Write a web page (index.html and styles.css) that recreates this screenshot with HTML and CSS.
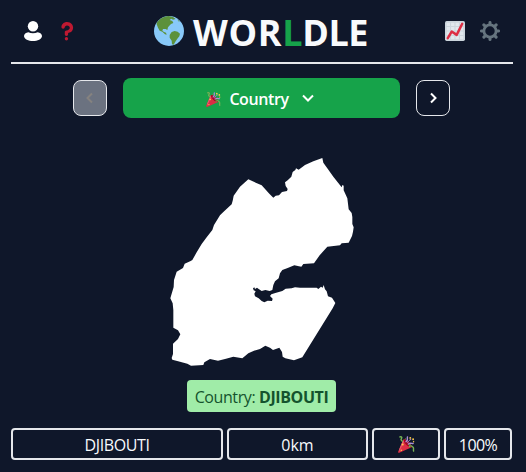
FILE: index.html
```html
<!DOCTYPE html>
<html lang="en">
<head>
<meta charset="utf-8">
<title>Worldle</title>
<link rel="stylesheet" href="styles.css">
</head>
<body>
<svg class="defs" aria-hidden="true">
  <symbol id="popper" viewBox="0 0 36 36">
    <path fill="#dd2e44" d="M11.600 7.600c-.1.1-.2.3-.3.5L.2 33.300c-.5 1.300 1 2.900 2.500 2.400l25.200-11.100c.2-.1.4-.2.5-.3 1.700-1.700-.6-6.800-5.200-11.400S13.300 5.900 11.600 7.600z"/>
    <path fill="#ea596e" d="M13 12l-11 22 1-7 8-19z"/>
    <path fill="#a0041e" d="M23 13c4.400 4.400 6.700 9.300 5.200 10.800S21.800 23 17.400 18.600 11.100 9.300 12.600 7.800 18.600 8.600 23 13z"/>
    <path fill="none" stroke="#aa8dd8" stroke-width="3" stroke-linecap="round" d="M17 12c5-3 2-6 3-10M22 17c5-3 6-1 10-1"/>
    <path fill="none" stroke="#77b255" stroke-width="3" stroke-linecap="round" d="M4 2c4-1 5 1 3 4s1 3 2 5M24 22c4-3 6 0 8 2s0 5 1 8"/>
    <path fill="none" stroke="#aa8dd8" stroke-width="2" d="M20 15c2-4 4-7 8-8"/>
    <g fill="#ffcc4d"><circle cx="10" cy="18" r="2"/><circle cx="26" cy="4" r="2"/><circle cx="32" cy="7" r="2"/><circle cx="33" cy="12" r="1.500"/><circle cx="7" cy="30" r="1.500"/></g>
    <g fill="#5c913b"><circle cx="25" cy="19" r="2"/><circle cx="16" cy="6" r="1.500"/></g>
  </symbol>
</svg>
<header class="header">
  <nav class="nav">
    <svg class="user" viewBox="0 0 18 20" aria-label="Profile"><path d="M4.400 11.200C1.800 11.400 0 13.200 0 15c0 3 4.500 5 9 5s9-2 9-5c0-1.800-1.800-3.600-4.400-3.800C11 12.600 7 12.600 4.400 11.200z"/><circle cx="9" cy="5.200" r="5.200"/></svg>
    <svg class="emoji" viewBox="0 0 36 36" aria-label="Help"><path fill="#be1931" d="M17 27c-1.657 0-3-1.343-3-3v-4c0-1.657 1.343-3 3-3 .603-.006 6-1 6-5 0-2-2-4-5-4-2.441 0-4 2-4 3 0 1.657-1.343 3-3 3s-3-1.343-3-3c0-4.878 4.580-9 10-9 8 0 11 5.982 11 10 0 4.145-2.277 7.313-6.413 8.920-.9.351-1.790.587-2.587.747V24c0 1.657-1.343 3-3 3z"/><circle cx="17" cy="32" r="3" fill="#be1931"/></svg>
  </nav>
  <h1 class="title">
    <svg class="globe" viewBox="0 0 90 90"><circle cx="45" cy="45" r="45" fill="#88c9f9"/><path fill="#5c913b" d="M8 21C16 9 29 1 44 0l13 3 8 6-8 2-5-3-5 4 8 3 3 6-7 3-5 5-4 5-2 8-5-3-8 0-2 5 5 4 6 2 2 6-5-1-8-8-8-3-5-9-4-10zM53 48l9-3 9 2 7 6-2 8-6 7-6 9-5 9-5-1-1-11-6-9 0-8zM70 10l8 7-5-1z"/></svg>
    <span class="wordmark"><span class="wide">WOR</span><span class="accent">L</span>DLE</span>
  </h1>
  <nav class="nav">
    <svg class="emoji" viewBox="0 0 36 36" aria-label="Statistics"><rect width="36" height="36" rx="3" fill="#ccd6dd"/><path fill="#e1e8ed" d="M3 3h6v6H3zm8 0h6v6h-6zm8 0h6v6h-6zm8 0h6v6h-6zM3 11h6v6H3zm8 0h6v6h-6zm8 0h6v6h-6zm8 0h6v6h-6zM3 19h6v6H3zm8 0h6v6h-6zm8 0h6v6h-6zm8 0h6v6h-6zM3 27h6v6H3zm8 0h6v6h-6zm8 0h6v6h-6zm8 0h6v6h-6z"/><path d="M5 31l7-12 9 6L31 5" fill="none" stroke="#dd2e44" stroke-width="4.500" stroke-linecap="round" stroke-linejoin="round"/></svg>
    <svg class="emoji" viewBox="-18 -18 36 36" aria-label="Settings"><g fill="none" stroke="#66757f"><circle r="11" stroke-width="5"/><path stroke-width="5.500" stroke-linecap="round" d="M0-13v-2.300M0 13v2.300M-13 0h-2.300M13 0h2.300M9.200-9.200l1.800-1.800M-9.200-9.200l-1.800-1.800M9.200 9.200l1.800 1.800M-9.200 9.200l-1.800 1.800"/></g></svg>
  </nav>
</header>
<main class="game">
  <div class="rounds">
    <button class="step step-off" disabled aria-label="Previous"><svg viewBox="0 0 12 12"><path d="M8 1.500L3.500 6 8 10.500"/></svg></button>
    <button class="round"><svg class="popper-small"><use href="#popper"/></svg><span class="round-name">Country</span><svg class="caret" viewBox="0 0 12 12"><path d="M1 3.500l5 5 5-5"/></svg></button>
    <button class="step" aria-label="Next"><svg viewBox="0 0 12 12"><path d="M4 1.500L8.500 6 4 10.500"/></svg></button>
  </div>
  <svg class="country" viewBox="0 0 600 660" aria-label="Country outline">
    <path d="M97 330L110 307 125 282 140 262 157 240 162 225 180 196 190 186 215 163 218 152 221 137 240 110 265 88 305 106 328 131 340 143 347 137 357 136 366 126 381 123 383 117 377 108 375 97 383 91 394 80 398 66 406 60 408 55 416 59 435 45 460 34 487 24 490 38 503 56 520 80 545 112 547 105 551 107 551 121 562 145 566 178 575 189 577 201 577 222 581 232 579 245 576 258 566 278 545 280 540 286 502 290 479 316 462 340 430 342 424 350 403 346 383 354 367 360 360 370 356 385 345 394 340 405 337 420 329 423 316 420 305 423 296 417 291 413 285 417 283 412 279 415 281 421 287 424 283 431 285 439 296 445 305 453 313 457 323 452 336 453 338 446 330 438 334 433 346 429 367 423 377 416 395 415 405 412 420 413 470 413 475 417 483 410 488 413 491 405 495 418 500 424 504 439 516 443 526 459 518 475 427 622 402 631 376 625 368 620 366 606 358 593 339 600 330 593 316 587 300 597 282 602 265 610 247 625 220 620 198 626 174 632 150 627 133 637 130 645 93 647 82 641 60 635 37 629 35 624 39 612 39 581 54 567 61 553 54 541 40 533 40 480 38 460 31 445 41 411 42 390 50 365 69 354 74 341 92 333Z"/>
  </svg>
  <p class="answer">Country: <b>DJIBOUTI</b></p>
  <div class="guess">
    <div class="cell cell-name">DJIBOUTI</div>
    <div class="cell">0km</div>
    <div class="cell"><svg class="popper"><use href="#popper"/></svg></div>
    <div class="cell cell-percent">100%</div>
  </div>
</main>
</body>
</html>
```
FILE: styles.css
```css
* { box-sizing: border-box; }
body {
  margin: 0;
  padding: 0 13px 0 11px;
  height: 472px;
  overflow: hidden;
  background: #0f172a;
  color: #f8fafc;
  font: 16px/24px "Open Sans", "Noto Sans", sans-serif;
}
svg { display: block; flex: none; }
.defs { position: absolute; width: 0; height: 0; }
.header {
  display: flex;
  justify-content: space-between;
  align-items: center;
  height: 64px;
  padding: 0 13px;
  border-bottom: 2px solid #e5e7eb;
}
.nav { display: flex; align-items: center; gap: 15px; }
.user { width: 18px; height: 20px; fill: #fff; }
.emoji { width: 20px; height: 20px; }
.title {
  display: flex;
  align-items: center;
  gap: 9px;
  margin: 0;
  font-size: 36px;
  line-height: 40px;
  font-weight: 700;
}
.wordmark { padding-top: 4px; letter-spacing: -0.4px; }
.wide { letter-spacing: 0.7px; }
.globe { width: 30px; height: 30px; }
.accent { color: #16a34a; }
.game { display: flex; flex-direction: column; }
.rounds {
  display: flex;
  align-items: center;
  gap: 16px;
  height: 40px;
  margin: 14px 0 0 62px;
}
.step {
  display: flex;
  align-items: center;
  justify-content: center;
  width: 34px;
  height: 36px;
  padding: 0;
  border: 1px solid #e5e7eb;
  border-radius: 8px;
  background: none;
  color: #fff;
}
.step svg, .caret { width: 12px; height: 12px; fill: none; stroke: currentColor; stroke-width: 2; }
.step-off { background: #6b7280; color: #85827f; }
.round {
  display: flex;
  align-items: center;
  justify-content: center;
  width: 277px;
  height: 40px;
  padding: 2px 3px 0 0;
  border: 0;
  border-radius: 8px;
  background: #16a34a;
  color: #fff;
  font: 600 16px/24px "Open Sans", sans-serif;
}
.popper-small { width: 15px; height: 15px; margin-right: 8px; }
.round-name { margin-right: 13px; letter-spacing: -0.4px; }
.caret { margin-top: -2px; }
.country { width: 200px; height: 220px; margin: 32px 0 0 149px; fill: #fff; }
.answer {
  width: 149px;
  height: 32px;
  margin: 10px 0 0 176px;
  padding: 5px 0;
  border-radius: 4px;
  background: #a0eca8;
  color: #14532d;
  text-align: center;
  white-space: nowrap;
  letter-spacing: -0.4px;
}
.guess {
  display: grid;
  grid-template-columns: 212px 141px 68px 68px;
  gap: 4px;
  margin-top: 16px;
}
.cell {
  display: flex;
  align-items: center;
  justify-content: center;
  height: 32px;
  padding-top: 2px;
  border: 2px solid #e5e7eb;
  border-radius: 4px;
}
.cell-name { letter-spacing: -0.4px; }
.cell-percent { letter-spacing: -0.6px; }
.popper { width: 17px; height: 17px; margin-top: -2px; }
```
